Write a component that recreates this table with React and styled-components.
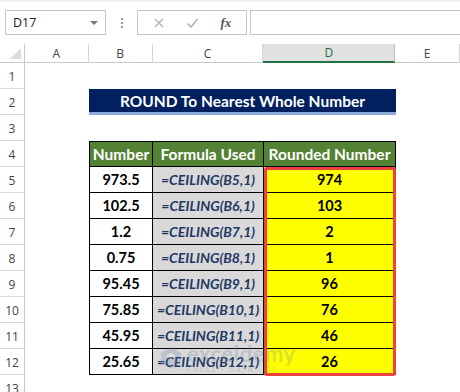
import React from 'react';
import styled, { createGlobalStyle } from 'styled-components';

const GlobalStyle = createGlobalStyle`
  body {
    margin: 0;
    background: #ffffff;
    font-family: "Lato", "Open Sans", sans-serif;
  }
`;

const Window = styled.div`
  width: 460px;
  height: 392px;
  overflow: hidden;
  background: #ffffff;
  position: relative;
`;

const Toolbar = styled.div`
  height: 44px;
  display: flex;
  align-items: flex-start;
  padding-top: 8px;
  padding-left: 5px;
  box-sizing: border-box;
  border-top: 2px solid #f0f0f0;
`;

const NameBox = styled.div`
  width: 101px;
  height: 25px;
  box-sizing: border-box;
  border: 1px solid #c6c6c6;
  display: flex;
  align-items: center;
  justify-content: space-between;
  padding: 0 7px 0 7px;
  font-family: "Open Sans", sans-serif;
  font-size: 12.5px;
  color: #222;
`;

const Caret = styled.span`
  width: 0;
  height: 0;
  border-left: 4px solid transparent;
  border-right: 4px solid transparent;
  border-top: 4px solid #777;
`;

const Dots = styled.div`
  width: 31px;
  height: 25px;
  display: flex;
  flex-direction: column;
  align-items: center;
  justify-content: center;
  gap: 2px;
  span {
    width: 2px;
    height: 2px;
    background: #9a9a9a;
  }
`;

const FxBox = styled.div`
  width: 110px;
  height: 25px;
  box-sizing: border-box;
  border: 1px solid #c6c6c6;
  display: flex;
  align-items: center;
  justify-content: space-around;
  padding: 0 4px;
  margin-right: 3px;
`;

const FxLabel = styled.span`
  font-family: "Liberation Serif", serif;
  font-style: italic;
  font-weight: bold;
  font-size: 13px;
  color: #555;
`;

const FormulaInput = styled.div`
  flex: 1;
  height: 25px;
  box-sizing: border-box;
  border: 1px solid #c6c6c6;
  border-right: none;
`;

const widths = [64, 64, 111, 132, 65];

const HeaderRow = styled.div`
  display: flex;
  height: 19px;
`;

const Corner = styled.div`
  width: 25px;
  height: 19px;
  box-sizing: border-box;
  border-right: 1px solid #c9c9c9;
  border-bottom: 1px solid #c9c9c9;
  position: relative;
  &::after {
    content: '';
    position: absolute;
    right: 3px;
    bottom: 3px;
    width: 0;
    height: 0;
    border-left: 11px solid transparent;
    border-bottom: 11px solid #dcdcdc;
  }
`;

const ColHead = styled.div`
  width: ${p => p.$w}px;
  height: 19px;
  box-sizing: border-box;
  display: flex;
  align-items: center;
  justify-content: center;
  font-family: "Open Sans", sans-serif;
  font-size: 12px;
  color: ${p => (p.$active ? '#217346' : '#444')};
  background: ${p => (p.$active ? '#e1e1e1' : '#ffffff')};
  border-right: 1px solid ${p => (p.$active ? '#bcbcbc' : '#d4d4d4')};
  border-bottom: ${p => (p.$active ? '2px solid #217346' : '1px solid #c9c9c9')};
`;

const Body = styled.div`
  position: relative;
`;

const Row = styled.div`
  display: flex;
  height: 26px;
`;

const RowHead = styled.div`
  width: 25px;
  height: 26px;
  flex: none;
  box-sizing: border-box;
  border-right: 1px solid #c9c9c9;
  border-bottom: 1px solid #dadada;
  display: flex;
  align-items: center;
  justify-content: center;
  padding-top: 2px;
  font-family: "Open Sans", sans-serif;
  font-size: 12px;
  color: #444;
`;

const Blank = styled.div`
  width: ${p => p.$w}px;
  flex: none;
`;

const Title = styled.div`
  width: 307px;
  height: 26px;
  flex: none;
  box-sizing: border-box;
  background: #002060;
  border-bottom: 3px solid #8ea9db;
  color: #ffffff;
  font-weight: bold;
  font-size: 15.5px;
  display: flex;
  align-items: center;
  justify-content: center;
  padding-top: 1px;
`;

const Cell = styled.div`
  width: ${p => p.$w}px;
  flex: none;
  box-sizing: border-box;
  border-right: 1px solid #000;
  border-bottom: 1px solid #000;
  border-left: ${p => (p.$first ? '1px solid #000' : 'none')};
  border-top: ${p => (p.$top ? '1px solid #000' : 'none')};
  display: flex;
  align-items: center;
  justify-content: center;
  font-weight: bold;
  font-size: 14.5px;
  white-space: nowrap;
  overflow: hidden;
  ${p => p.$kind === 'head' && `
    background: #548235;
    color: #ffffff;
    font-size: 15.5px;
  `}
  ${p => p.$kind === 'num' && `
    background: #ffffff;
    color: #000;
  `}
  ${p => p.$kind === 'formula' && `
    background: #d9d9d9;
    color: #1f3864;
    font-style: italic;
    font-size: 14px;
  `}
  ${p => p.$kind === 'result' && `
    background: #ffff00;
    color: #000;
  `}
`;

const Selection = styled.div`
  position: absolute;
  left: 264px;
  top: 104px;
  width: 132px;
  height: 209px;
  box-sizing: border-box;
  border: 3px solid #f04141;
  border-radius: 3px;
  pointer-events: none;
`;

const Watermark = styled.div`
  position: absolute;
  left: 158px;
  top: 280px;
  display: flex;
  align-items: center;
  gap: 3px;
  opacity: 0.25;
  pointer-events: none;
`;

const WmText = styled.div`
  display: flex;
  flex-direction: column;
  line-height: 1;
  color: #6a86a8;
  b {
    font-size: 22px;
    font-weight: bold;
    letter-spacing: 0.5px;
  }
  small {
    font-size: 7px;
    letter-spacing: 2px;
    margin-top: 1px;
  }
`;

const data = [
  ['973.5', 'B5', '974'],
  ['102.5', 'B6', '103'],
  ['1.2', 'B7', '2'],
  ['0.75', 'B8', '1'],
  ['95.45', 'B9', '96'],
  ['75.85', 'B10', '76'],
  ['45.95', 'B11', '46'],
  ['25.65', 'B12', '26'],
];

export default function App() {
  return (
    <Window>
      <GlobalStyle />
      <Toolbar>
        <NameBox>
          <span>D17</span>
          <Caret />
        </NameBox>
        <Dots><span /><span /><span /></Dots>
        <FxBox>
          <svg width="12" height="12" viewBox="0 0 12 12">
            <path d="M2 2 L10 10 M10 2 L2 10" stroke="#b5b5b5" strokeWidth="1.4" fill="none" />
          </svg>
          <svg width="13" height="12" viewBox="0 0 13 12">
            <path d="M1.5 6.5 L5 10 L11.5 2" stroke="#b5b5b5" strokeWidth="1.6" fill="none" />
          </svg>
          <FxLabel>fx</FxLabel>
        </FxBox>
        <FormulaInput />
      </Toolbar>

      <HeaderRow>
        <Corner />
        {['A', 'B', 'C', 'D', 'E'].map((c, i) => (
          <ColHead key={c} $w={widths[i]} $active={c === 'D'}>{c}</ColHead>
        ))}
      </HeaderRow>

      <Body>
        <Row><RowHead>1</RowHead></Row>
        <Row>
          <RowHead>2</RowHead>
          <Blank $w={64} />
          <Title>ROUND To Nearest Whole Number</Title>
        </Row>
        <Row><RowHead>3</RowHead></Row>
        <Row>
          <RowHead>4</RowHead>
          <Blank $w={64} />
          <Cell $w={64} $first $top $kind="head">Number</Cell>
          <Cell $w={111} $top $kind="head">Formula Used</Cell>
          <Cell $w={132} $top $kind="head">Rounded Number</Cell>
        </Row>
        {data.map((d, i) => (
          <Row key={i}>
            <RowHead>{i + 5}</RowHead>
            <Blank $w={64} />
            <Cell $w={64} $first $kind="num">{d[0]}</Cell>
            <Cell $w={111} $kind="formula">=CEILING({d[1]},1)</Cell>
            <Cell $w={132} $kind="result">{d[2]}</Cell>
          </Row>
        ))}
        <Row><RowHead>13</RowHead></Row>
        <Selection />
        <Watermark>
          <svg width="26" height="26" viewBox="0 0 26 26">
            <path d="M13 2 L23 8 L23 18 L13 24 L3 18 L3 8 Z" fill="#6a86a8" />
            <path d="M8 11 L13 8 L18 11 L13 14 Z" fill="#ffffff" />
          </svg>
          <WmText>
            <b>exceldemy</b>
            <small>EXCEL · DATA · BI</small>
          </WmText>
        </Watermark>
      </Body>
    </Window>
  );
}
